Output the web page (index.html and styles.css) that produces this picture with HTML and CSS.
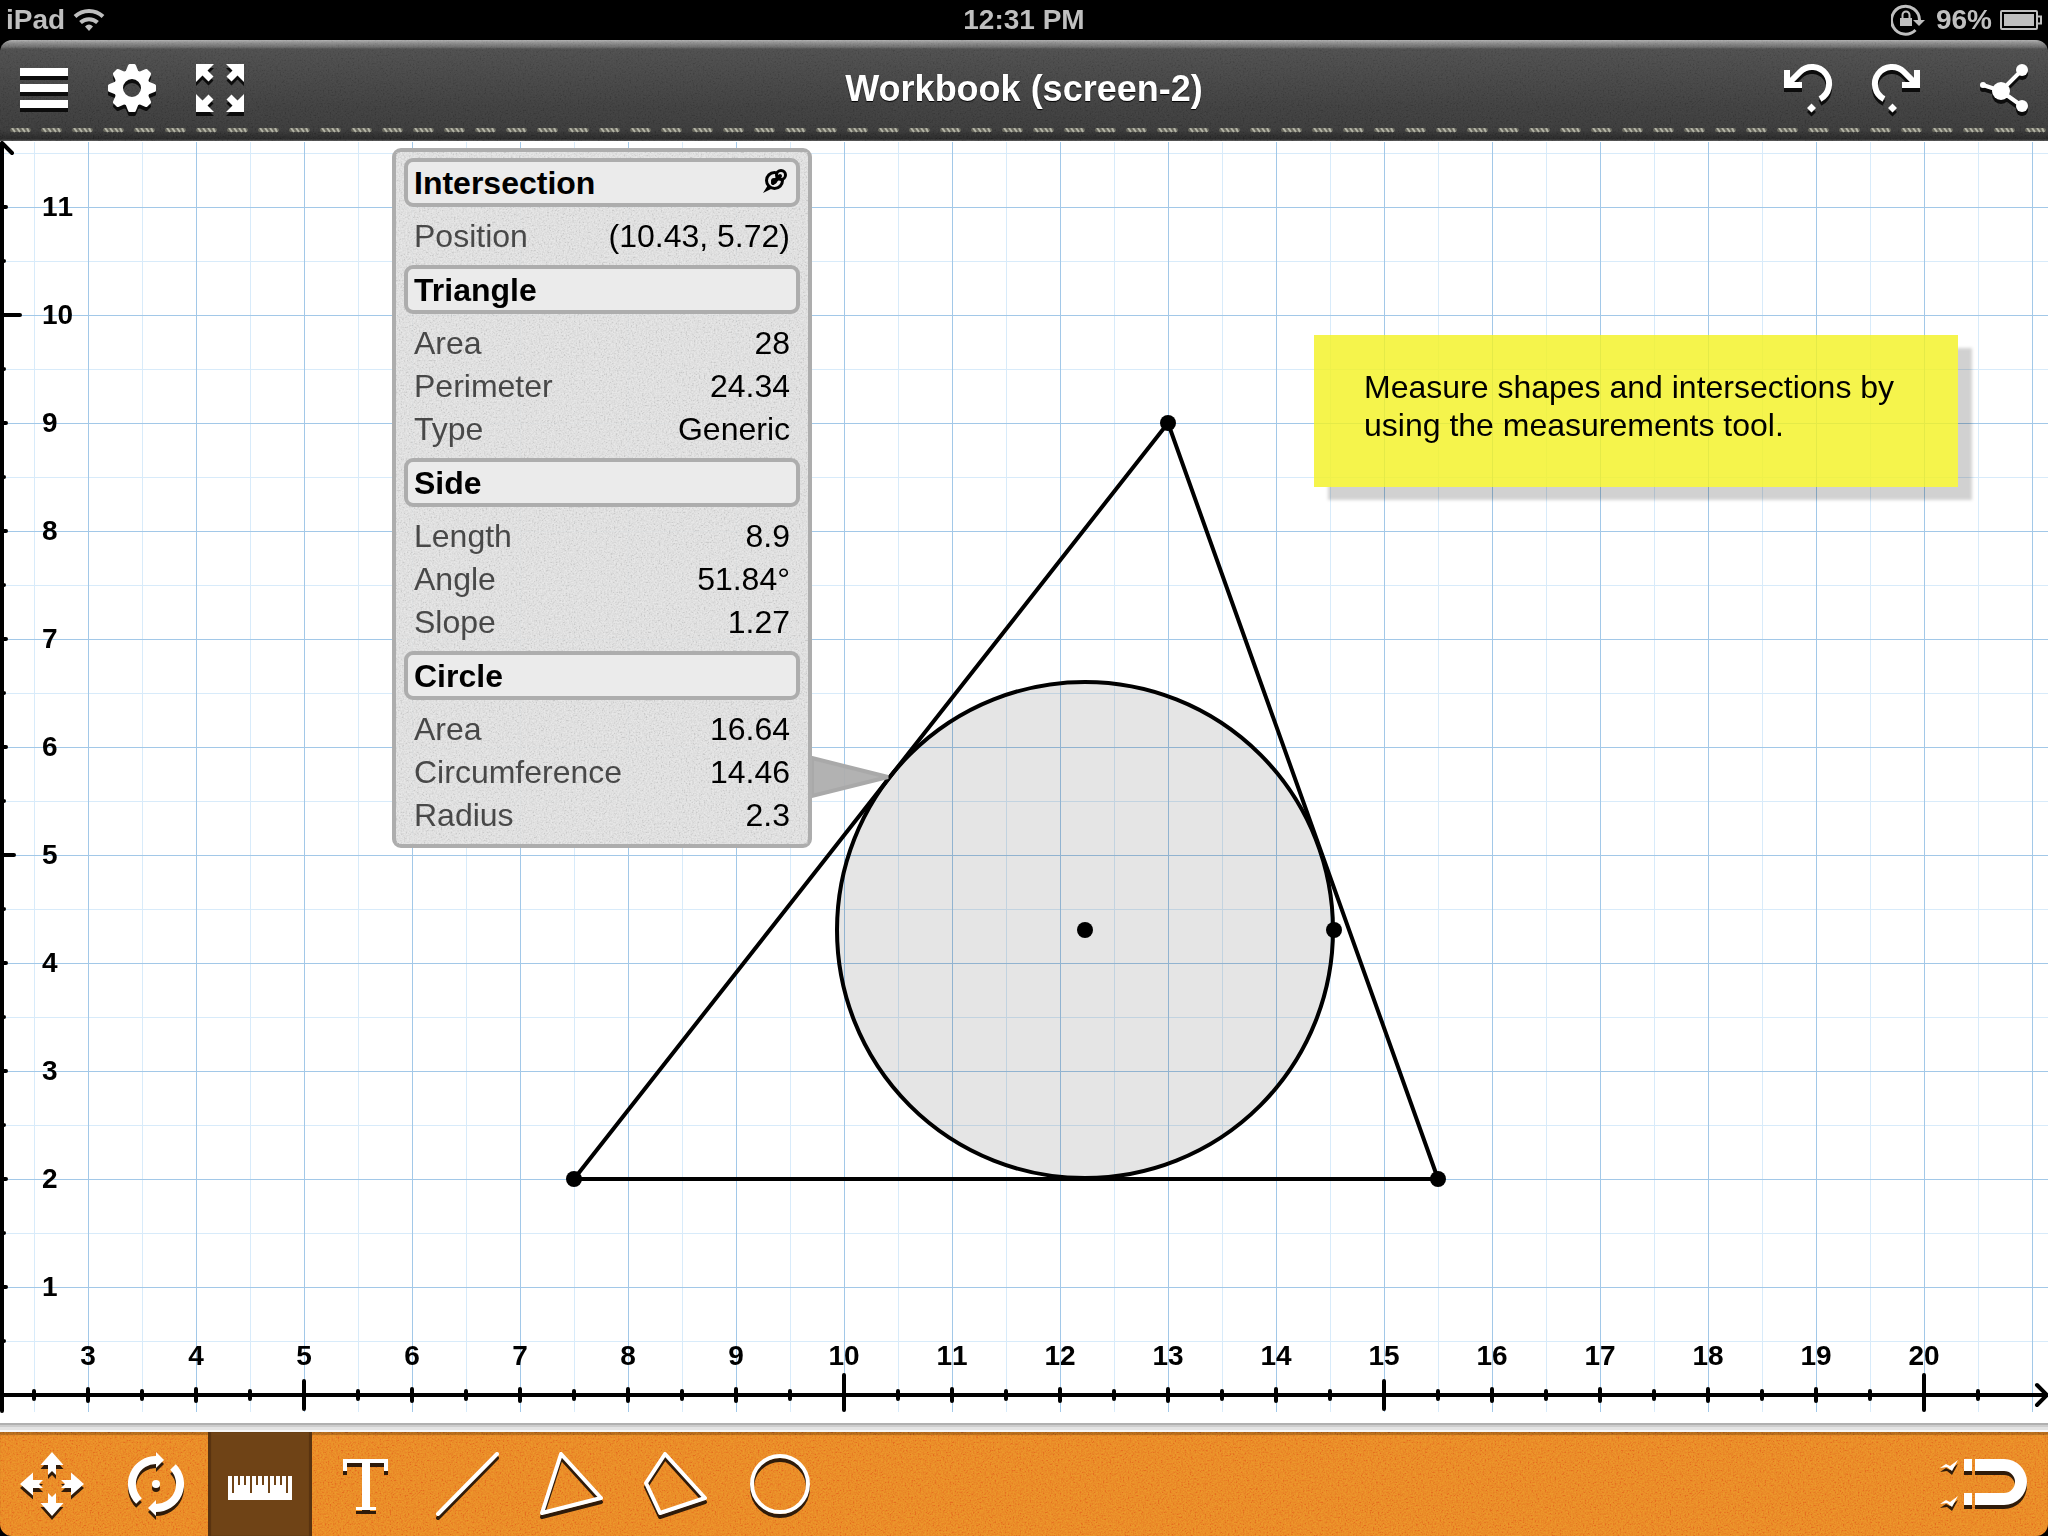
FILE: index.html
```
<!DOCTYPE html>
<html lang="en">
<head>
<meta charset="utf-8">
<meta name="viewport" content="width=device-width, initial-scale=1">
<title>Workbook (screen-2)</title>
<link rel="stylesheet" href="styles.css">
</head>
<body>
<svg class="defs" aria-hidden="true">
  <defs>
    <filter id="grain" x="0" y="0" width="100%" height="100%">
      <feTurbulence type="fractalNoise" baseFrequency="0.6" numOctaves="2" seed="4"/>
      <feColorMatrix values="1 0 0 0 0  1 0 0 0 0  1 0 0 0 0  0 0 0 0 1"/>
      <feComponentTransfer>
        <feFuncR type="linear" slope="2" intercept="-0.5"/>
        <feFuncG type="linear" slope="2" intercept="-0.5"/>
        <feFuncB type="linear" slope="2" intercept="-0.5"/>
      </feComponentTransfer>
    </filter>
    <pattern id="stitch" width="31" height="5" patternUnits="userSpaceOnUse">
      <rect x="10" y="0" width="21" height="4" rx="2" fill="#66665c"/>
      <path d="M12 0l3 4M17 0l3 4M22 0l3 4M27 0l2 4" stroke="#b4b4a6" stroke-width="2"/>
    </pattern>
  </defs>
</svg>

<div class="app">
  <div class="status">
    <div class="status-left">
      <span>iPad</span>
      <svg width="32" height="24" viewBox="0 0 32 24" fill="none" stroke="#bfbfbf" stroke-width="4">
        <path d="M2 8.500A20.500 20.500 0 0 1 30 8.500"/>
        <path d="M7.500 14.500A12.500 12.500 0 0 1 24.500 14.500"/>
        <path d="M16 23L12 18.500Q16 14.500 20 18.500Z" fill="#bfbfbf" stroke="none"/>
      </svg>
    </div>
    <span>12:31 PM</span>
    <div class="status-right">
      <svg class="rotation-lock" width="34" height="32" viewBox="0 0 34 32">
        <path d="M28.500 16A14 14 0 1 0 24.500 26" fill="none" stroke="#bfbfbf" stroke-width="3"/>
        <path d="M22 16H34L28 22Z" fill="#bfbfbf"/>
        <rect x="9" y="14" width="12" height="8" fill="#bfbfbf"/>
        <path d="M11.500 14V11a3.500 3.500 0 0 1 7 0V14" fill="none" stroke="#bfbfbf" stroke-width="2"/>
      </svg>
      <span>96%</span>
      <svg width="42" height="20" viewBox="0 0 42 20">
        <rect x="1" y="1" width="36" height="18" rx="1" fill="none" stroke="#bfbfbf" stroke-width="2"/>
        <rect x="4" y="4" width="30" height="12" fill="#bfbfbf"/>
        <path d="M38 6.500H41V13.500H38" fill="none" stroke="#bfbfbf" stroke-width="2"/>
      </svg>
    </div>
  </div>

  <header class="nav">
    <svg class="texture texture-nav" aria-hidden="true"><rect width="100%" height="100%" filter="url(#grain)"/></svg>
    <div class="nav-group">
      <button class="icon" aria-label="Menu">
        <svg width="48" height="48" viewBox="0 0 48 48" fill="#fff"><path d="M0 4H48V12H0ZM0 20H48V28H0ZM0 36H48V44H0Z"/></svg>
      </button>
      <button class="icon" aria-label="Settings">
        <svg width="48" height="48" viewBox="-24 -24 48 48" fill="#fff">
          <circle r="13.500" fill="none" stroke="#fff" stroke-width="9"/>
          <g id="teeth">
            <path id="tooth" d="M-2.500 -24H2.500Q3.500 -24 4 -22.500L7 -15H-7L-4 -22.500Q-3.500 -24 -2.500 -24Z"/>
            <use href="#tooth" transform="rotate(45)"/>
            <use href="#tooth" transform="rotate(90)"/>
            <use href="#tooth" transform="rotate(135)"/>
          </g>
          <use href="#teeth" transform="rotate(180)"/>
        </svg>
      </button>
      <button class="icon" aria-label="Full screen">
        <svg width="48" height="48" viewBox="0 0 48 48" fill="#fff">
          <path id="corner" d="M0 0H18L11.500 6.500L17.500 12.500L12.500 17.500L6.500 11.500L0 18Z"/>
          <use href="#corner" transform="rotate(90 24 24)"/>
          <use href="#corner" transform="rotate(180 24 24)"/>
          <use href="#corner" transform="rotate(270 24 24)"/>
        </svg>
      </button>
    </div>
    <h1 class="title">Workbook (screen-2)</h1>
    <div class="nav-group nav-group-end">
      <button class="icon" aria-label="Undo">
        <svg width="48" height="49" viewBox="0 0 48 49" fill="#fff">
          <path d="M4 20L16 8A17 17 0 1 1 36 35" fill="none" stroke="#fff" stroke-width="6"/>
          <path d="M0 6H6V18H18V24H0ZM27.500 39.500L32 44L27.500 48.500L23 44Z"/>
        </svg>
      </button>
      <button class="icon" aria-label="Redo">
        <svg width="48" height="49" viewBox="0 0 48 49" fill="#fff">
          <path d="M44 20L32 8A17 17 0 1 0 12 35" fill="none" stroke="#fff" stroke-width="6"/>
          <path d="M48 6H42V18H30V24H48ZM20.500 39.500L25 44L20.500 48.500L16 44Z"/>
        </svg>
      </button>
      <button class="icon icon-share" aria-label="Share">
        <svg width="48" height="48" viewBox="0 0 48 48" fill="#fff">
          <path d="M3 21L21 27L42 6M21 27L42 42" fill="none" stroke="#fff" stroke-width="4"/>
          <circle cx="3" cy="21" r="3"/><circle cx="21" cy="27" r="9"/><circle cx="42" cy="6" r="6"/><circle cx="42" cy="42" r="6"/>
        </svg>
      </button>
    </div>
    <svg class="stitches" aria-hidden="true"><rect width="100%" height="5" fill="url(#stitch)"/></svg>
  </header>

  <main class="canvas">
    <svg class="plot" viewBox="0 141 2048 1282" role="img" aria-label="Triangle with inscribed circle">
      <path id="minor" class="grid-minor"/>
      <path id="major" class="grid-major"/>
      <circle class="disc" cx="1085" cy="930" r="248"/>
      <path class="shape" d="M574 1179L1168 423L1438 1179Z"/>
      <g class="points">
        <circle cx="574" cy="1179" r="8"/><circle cx="1168" cy="423" r="8"/><circle cx="1438" cy="1179" r="8"/>
        <circle cx="1085" cy="930" r="8"/><circle cx="1334" cy="930" r="8"/>
      </g>
      <path id="axes" class="axis" d="M2 143V1411M2 143L12 153M2 1395H2046M2037 1385L2047 1395L2037 1405"/>
      <g id="labels" class="labels"></g>
      <path class="pointer" d="M812 758L888 777L812 796Z"/>
    </svg>

    <aside class="panel">
      <svg class="texture texture-panel" aria-hidden="true"><rect width="100%" height="100%" filter="url(#grain)"/></svg>
      <section>
        <h2>Intersection
          <button class="pin" aria-label="Pin">
            <svg width="24" height="24" viewBox="0 0 24 24" fill="none" stroke="#000" stroke-width="3">
              <circle cx="11.500" cy="11.500" r="8"/><circle cx="18" cy="6" r="4.500" fill="#ebebeb"/>
              <path d="M10 14L17 7" stroke-width="4" stroke-linecap="round"/><circle cx="11" cy="12" r="3" fill="#000" stroke="none"/>
              <path d="M0 24L8 20L5 16Z" fill="#000" stroke="none"/>
            </svg>
          </button>
        </h2>
        <dl>
          <div><dt>Position</dt><dd>(10.43, 5.72)</dd></div>
        </dl>
      </section>
      <section>
        <h2>Triangle</h2>
        <dl>
          <div><dt>Area</dt><dd>28</dd></div>
          <div><dt>Perimeter</dt><dd>24.34</dd></div>
          <div><dt>Type</dt><dd>Generic</dd></div>
        </dl>
      </section>
      <section>
        <h2>Side</h2>
        <dl>
          <div><dt>Length</dt><dd>8.9</dd></div>
          <div><dt>Angle</dt><dd>51.84°</dd></div>
          <div><dt>Slope</dt><dd>1.27</dd></div>
        </dl>
      </section>
      <section>
        <h2>Circle</h2>
        <dl>
          <div><dt>Area</dt><dd>16.64</dd></div>
          <div><dt>Circumference</dt><dd>14.46</dd></div>
          <div><dt>Radius</dt><dd>2.3</dd></div>
        </dl>
      </section>
    </aside>

    <p class="note">Measure shapes and intersections by using the measurements tool.</p>
  </main>

  <footer class="tools">
    <svg class="texture texture-tools" aria-hidden="true"><rect width="100%" height="100%" filter="url(#grain)"/></svg>
    <button class="tool" aria-label="Move">
      <svg width="64" height="64" viewBox="0 0 64 64" fill="#fff">
        <path id="arrow" d="M32 0L43.500 13H36V23L32 19L28 23V13H20.500Z"/>
        <use href="#arrow" transform="rotate(90 32 32)"/>
        <use href="#arrow" transform="rotate(180 32 32)"/>
        <use href="#arrow" transform="rotate(270 32 32)"/>
      </svg>
    </button>
    <button class="tool" aria-label="Rotate">
      <svg width="64" height="64" viewBox="0 0 64 64" fill="#fff">
        <g id="turn">
          <path d="M15 49A24 24 0 0 1 33 8" fill="none" stroke="#fff" stroke-width="8"/>
          <path d="M32 0L40 8L32 16Z"/>
        </g>
        <use href="#turn" transform="rotate(180 32 32)"/>
        <circle cx="32" cy="32" r="4"/>
      </svg>
    </button>
    <button class="tool tool-active" aria-label="Measure" aria-pressed="true">
      <svg width="64" height="64" viewBox="0 0 64 64" fill="#fff">
        <path d="M0 24H4V41H6V24H10V33H12V24H16V33H18V24H22V41H24V24H28V33H30V24H34V33H36V24H40V41H42V24H46V33H48V24H52V33H54V24H58V41H60V24H64V48H0Z"/>
      </svg>
    </button>
    <button class="tool" aria-label="Text">
      <svg width="64" height="64" viewBox="0 0 64 64" fill="#fff"><path d="M11 7H56V19H52V11H38V55H44V58H24V55H30V11H15V19H11Z"/></svg>
    </button>
    <button class="tool" aria-label="Line">
      <svg width="64" height="64" viewBox="0 0 64 64" class="outline"><path d="M2 62L61 2"/></svg>
    </button>
    <button class="tool" aria-label="Triangle">
      <svg width="64" height="64" viewBox="0 0 64 64" class="outline"><path d="M21 2L61 46L2 61Z"/></svg>
    </button>
    <button class="tool" aria-label="Polygon">
      <svg width="64" height="64" viewBox="0 0 64 64" class="outline"><path d="M21 2L61 46L16 61L2 31Z"/></svg>
    </button>
    <button class="tool" aria-label="Circle">
      <svg width="64" height="64" viewBox="0 0 64 64" class="outline"><circle cx="32" cy="32" r="28"/></svg>
    </button>
    <button class="tool tool-snap" aria-label="Snap">
      <svg width="88" height="64" viewBox="0 0 88 64" fill="#fff">
        <path d="M35 7H64A23 23 0 0 1 64 53H35V41H64A11 11 0 0 0 64 19H35ZM24 7H32V19H24ZM24 41H32V53H24Z"/>
        <path id="bolt" d="M0 16L6 12L10 14L18 8L12 19L7 15Z"/>
        <use href="#bolt" y="36"/>
      </svg>
    </button>
  </footer>
</div>
<script src="plot.js"></script>
</body>
</html>
```
FILE: styles.css
```
* { box-sizing: border-box; }

body {
  margin: 0;
  background: #000;
  font-family: "Liberation Sans", Arial, Helvetica, sans-serif;
  color: #000;
}

h1, h2, p, dl, dd { margin: 0; }

button {
  display: block;
  margin: 0;
  padding: 0;
  border: 0;
  background: none;
}

svg { display: block; }

.defs { position: absolute; width: 0; height: 0; }

.app {
  display: flex;
  flex-direction: column;
  min-height: 100vh;
}

.texture {
  position: absolute;
  inset: 0;
  width: 100%;
  height: 100%;
  pointer-events: none;
}
.texture-nav { opacity: .05; }
.texture-panel { opacity: .4; mix-blend-mode: overlay; }
.texture-tools { opacity: .18; mix-blend-mode: overlay; }

/* Status bar */
.status {
  display: grid;
  grid-template-columns: 1fr auto 1fr;
  align-items: center;
  height: 40px;
  padding: 0 6px;
  color: #bfbfbf;
  font-size: 28px;
  font-weight: bold;
  line-height: 36px;
}
.status-left, .status-right { display: flex; align-items: center; gap: 8px; }
.status-right { justify-content: flex-end; }
.rotation-lock { margin-right: 3px; }

/* Navigation bar */
.nav {
  position: relative;
  display: grid;
  grid-template-columns: 1fr auto 1fr;
  align-items: center;
  height: 101px;
  padding: 0 20px 5px;
  border-radius: 12px 12px 0 0;
  overflow: hidden;
  background: linear-gradient(#b0b0b0 0, #8c8c8c 3px, #6c6c6c 7px, #4b4b4b 9px, #373737 90px, #242424 99px, #5a5a5a 101px);
}
.nav-group { position: relative; display: flex; gap: 40px; }
.nav-group-end { justify-content: flex-end; }
.icon svg { overflow: visible; filter: drop-shadow(0 4px 0 #0c0c0c); }
.icon-share { margin-left: 20px; }
.title {
  position: relative;
  padding-top: 2px;
  color: #fff;
  font-size: 36px;
  line-height: 44px;
  text-shadow: 0 1px 1px #000;
}
.stitches {
  position: absolute;
  left: 0;
  bottom: 8px;
  width: 100%;
  height: 5px;
}

/* Drawing canvas */
.canvas {
  position: relative;
  flex: 1;
  background: #fff;
}
.plot { width: 100%; height: auto; }
.grid-minor, .grid-major { fill: none; stroke-width: 1; }
.grid-minor { stroke: #d8ebfa; }
.grid-major { stroke: #a2c8e8; }
.disc { fill: rgba(0, 0, 0, .1); stroke: #000; stroke-width: 4; }
.shape { fill: none; stroke: #000; stroke-width: 4; stroke-linejoin: round; }
.axis { fill: none; stroke: #000; stroke-width: 4; stroke-linecap: round; }
.labels { font-size: 28px; font-weight: bold; font-kerning: none; }
.label-x { text-anchor: middle; }
.pointer {
  fill: rgba(174, 174, 174, .95);
  stroke: #a9a9a9;
  stroke-width: 4;
}

/* Measurements panel */
.panel {
  position: absolute;
  left: 392px;
  top: 7px;
  width: 420px;
  padding: 6px 8px 0;
  border: 4px solid #adadad;
  border-radius: 9px;
  background: rgba(216, 216, 216, .97);
  font-size: 32px;
}
.panel section { position: relative; }
.panel h2 {
  display: flex;
  justify-content: space-between;
  height: 49px;
  padding: 0 9px 0 6px;
  border: 4px solid #adadad;
  border-radius: 9px;
  background: #ebebeb;
  font-size: 32px;
  line-height: 42px;
}
.pin { align-self: flex-start; padding-top: 7px; }
.panel dl { padding: 8px 10px 7px; }
.panel dl div {
  display: flex;
  justify-content: space-between;
  line-height: 43px;
}
.panel dt { color: #484848; }

/* Sticky note */
.note {
  position: absolute;
  left: 1314px;
  top: 194px;
  width: 644px;
  height: 152px;
  padding: 33px 50px;
  background: rgba(243, 241, 36, .82);
  box-shadow: 14px 13px 3px rgba(0, 0, 0, .18);
  font-size: 32px;
  line-height: 38px;
}

/* Tool bar */
.tools {
  position: relative;
  display: flex;
  height: 113px;
  border-top: 9px solid #ccc;
  border-image: linear-gradient(#b0b0b0 0 2px, #ccc 2px 4px, #e3e3e3 4px 7px, #f6f6f6 7px 9px) 9 0 0 0;
  background: #e98325;
  border-radius: 0 0 12px 12px;
  overflow: hidden;
  box-shadow: inset 0 3px 1px #b0641a;
}
.tool {
  position: relative;
  display: grid;
  place-items: center;
  width: 104px;
}
.tool svg { overflow: visible; filter: drop-shadow(0 4px 0 #2f1b0a); }
.tool-active { background: #6f4316; box-shadow: inset 3px 0 1px #573210, inset -3px 0 1px #573210; }
.tool-active svg { filter: none; }
.tool-snap { width: 128px; margin-left: auto; }
.outline { fill: none; stroke: #fff; stroke-width: 4; stroke-linejoin: round; stroke-linecap: round; }
```
FILE: plot.js
```
// Builds the grid, the axis ticks and the axis labels. One unit is 108 px.
const UNIT = 108;
const toX = x => -236 + x * UNIT;
const toY = y => 1395 - y * UNIT;

let minor = "", major = "", ticks = "";
const labels = document.getElementById("labels");

function addLabel(text, x, y, name) {
  const node = document.createElementNS("http://www.w3.org/2000/svg", "text");
  node.setAttribute("x", x);
  node.setAttribute("y", y);
  node.setAttribute("class", name);
  node.textContent = text;
  labels.append(node);
}

for (let n = 5; n <= 42; n++) {
  const x = toX(n / 2), whole = n % 2 === 0, value = n / 2;
  const line = `M${x + 0.5} 142V1412`;
  if (whole) major += line; else minor += line;
  if (value > 20.5) continue;
  let up = 4, down = 4;
  if (whole) { up = 6; down = 6; }
  if (whole && value % 5 === 0) { up = 14; down = 14; }
  if (whole && value % 10 === 0) { up = 20; down = 15; }
  ticks += `M${x} ${1395 - up}V${1395 + down}`;
  if (whole) addLabel(value, x, 1365, "label-x");
}

for (let n = 1; n <= 23; n++) {
  const y = toY(n / 2), whole = n % 2 === 0, value = n / 2;
  const line = `M0 ${y + 0.5}H2048`;
  if (whole) major += line; else minor += line;
  let size = 4;
  if (whole) size = 6;
  if (whole && value % 5 === 0) size = 14;
  if (whole && value % 10 === 0) size = 20;
  if (n < 23) ticks += `M2 ${y}H${size}`;
  if (whole) addLabel(value, 42, y + 9, "label-y");
}

document.getElementById("minor").setAttribute("d", minor);
document.getElementById("major").setAttribute("d", major);
const axes = document.getElementById("axes");
axes.setAttribute("d", axes.getAttribute("d") + ticks);
```
